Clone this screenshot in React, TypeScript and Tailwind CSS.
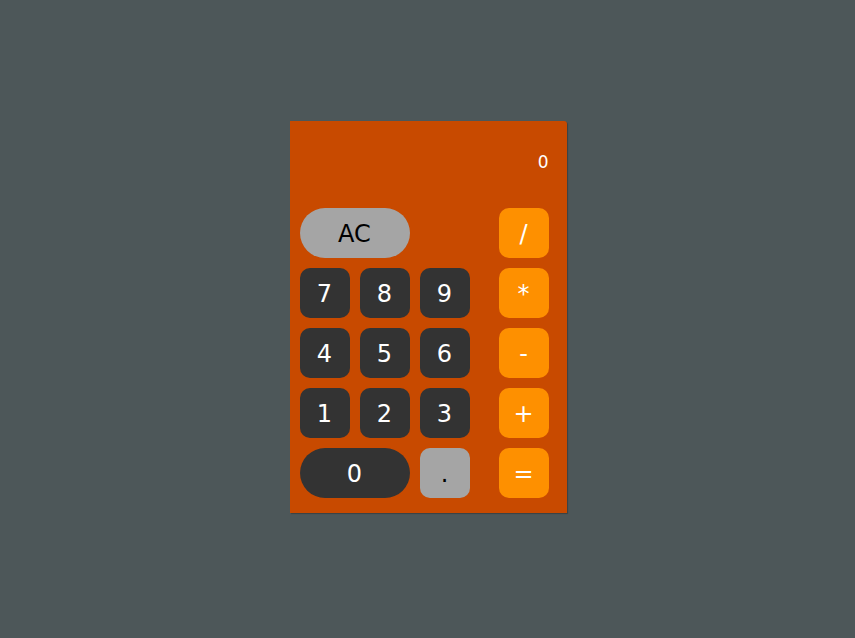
import React from "react"

const font = { fontFamily: '"DejaVu Sans", Verdana, sans-serif' }

const Key = ({ label, kind, wide }: { label: string; kind: "num" | "gray" | "op"; wide?: boolean }) => {
    const color =
        kind === "num"
            ? "bg-[#333333] text-white"
            : kind === "gray"
              ? "bg-[#a5a5a5] text-black"
              : "bg-[#fe9000] text-white"
    const shape = wide ? "w-[110px] rounded-full" : "w-[50px] rounded-[10px]"
    return (
        <div className={`h-[50px] flex items-center justify-center text-[24px] pt-[1px] ${color} ${shape}`}>
            {label}
        </div>
    )
}

const rows: { label: string; kind: "num" | "gray"; wide?: boolean }[][] = [
    [{ label: "AC", kind: "gray", wide: true }],
    [
        { label: "7", kind: "num" },
        { label: "8", kind: "num" },
        { label: "9", kind: "num" },
    ],
    [
        { label: "4", kind: "num" },
        { label: "5", kind: "num" },
        { label: "6", kind: "num" },
    ],
    [
        { label: "1", kind: "num" },
        { label: "2", kind: "num" },
        { label: "3", kind: "num" },
    ],
    [
        { label: "0", kind: "num", wide: true },
        { label: ".", kind: "gray" },
    ],
]

const ops = ["/", "*", "-", "+", "="]

export default function App() {
    return (
        <div className="min-h-[638px] w-full bg-[#4d5759] flex items-center justify-center" style={font}>
            <div className="w-[277px] ml-[1px] bg-[#c84a00] rounded-tr-[3px] shadow-[1px_1px_1px_rgba(0,0,0,0.25)] pt-[10px] pl-[10px] pr-[18px] pb-[15px] mt-[-4px]">
                <div className="h-[77px] flex items-center justify-end text-white text-[17px] pb-[13px]">0</div>
                <div className="flex justify-between">
                    <div className="flex flex-col gap-[10px]">
                        {rows.map((row, i) => (
                            <div key={i} className="flex gap-[10px]">
                                {row.map((k) => (
                                    <Key key={k.label} label={k.label} kind={k.kind} wide={k.wide} />
                                ))}
                            </div>
                        ))}
                    </div>
                    <div className="flex flex-col gap-[10px]">
                        {ops.map((o) => (
                            <Key key={o} label={o} kind="op" />
                        ))}
                    </div>
                </div>
            </div>
        </div>
    )
}
